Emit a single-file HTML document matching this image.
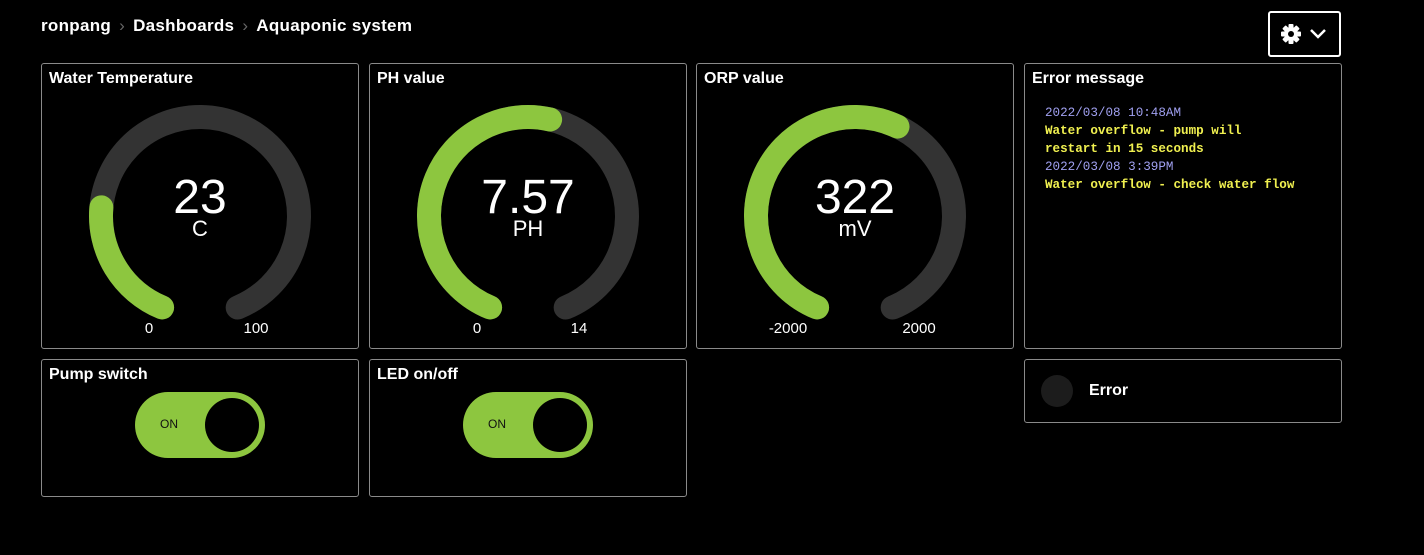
<!DOCTYPE html>
<html><head><meta charset="utf-8"><style>
*{margin:0;padding:0;box-sizing:border-box}
body{width:1424px;height:555px;background:#000;color:#fff;font-family:"Liberation Sans",sans-serif;position:relative;overflow:hidden}
.bc{position:absolute;left:41px;top:16px;font-size:17px;font-weight:bold;white-space:nowrap;letter-spacing:0.3px}
.bc span.s{color:#666;font-weight:normal;margin:0 8px}
.card{position:absolute;border:1px solid #8a8a8a;border-radius:3px;background:#000}
.t{position:absolute;left:7px;top:6px;font-size:16px;font-weight:bold}
.gbtn{position:absolute;left:1268px;top:11px;width:73px;height:46px;border:2px solid #fff;border-radius:3px}
.log{position:absolute;left:20px;top:40px;font-family:"Liberation Mono",monospace;font-size:12.6px;line-height:18px;font-weight:bold}
.d{color:#a0a0f0;font-weight:normal}.m{color:#f0f050}
.tog{position:absolute;width:130px;height:66px;border-radius:33px;background:#8dc63f}
.tog .k{position:absolute;right:6px;top:6px;width:54px;height:54px;border-radius:50%;background:#000}
.tog .on{position:absolute;left:25px;top:25px;font-size:12px;color:#111}
</style></head><body>
<div class="bc">ronpang<span class="s">›</span>Dashboards<span class="s">›</span>Aquaponic system</div>
<div class="gbtn"><svg width="73" height="46" viewBox="0 0 73 46" style="position:absolute;left:-2px;top:-2px">
<g transform="translate(23,23)" fill="#fff"><circle r="7"/>
<g id="tt"><rect x="-2.5" y="-10" width="5" height="20" rx="1"/></g>
<use href="#tt" transform="rotate(45)"/><use href="#tt" transform="rotate(90)"/><use href="#tt" transform="rotate(135)"/>
<circle r="3" fill="#000"/></g>
<path d="M43 19l7 7 7-7" stroke="#fff" stroke-width="2.5" fill="none"/></svg></div>

<div class="card" style="left:41px;top:63px;width:318px;height:286px"><div class="t">Water Temperature</div></div>
<div class="card" style="left:369px;top:63px;width:318px;height:286px"><div class="t">PH value</div></div>
<div class="card" style="left:696px;top:63px;width:318px;height:286px"><div class="t">ORP value</div></div>
<div class="card" style="left:1024px;top:63px;width:318px;height:286px"><div class="t">Error message</div>
<div class="log"><div class="d">2022/03/08 10:48AM</div><div class="m">Water overflow - pump will<br>restart in 15 seconds</div><div class="d">2022/03/08 3:39PM</div><div class="m">Water overflow - check water flow</div></div></div>

<svg width="1424" height="555" style="position:absolute;left:0;top:0" font-family="Liberation Sans,sans-serif" fill="#fff">
<g fill="none" stroke-width="24" stroke-linecap="round">
<circle cx="200" cy="216" r="99" stroke="#333" stroke-dasharray="544.3 1000" transform="rotate(112.5 200 216)"/>
<circle cx="200" cy="216" r="99" stroke="#8dc63f" stroke-dasharray="125.2 1000" transform="rotate(112.5 200 216)"/>
<circle cx="528" cy="216" r="99" stroke="#333" stroke-dasharray="544.3 1000" transform="rotate(112.5 528 216)"/>
<circle cx="528" cy="216" r="99" stroke="#8dc63f" stroke-dasharray="294.3 1000" transform="rotate(112.5 528 216)"/>
<circle cx="855" cy="216" r="99" stroke="#333" stroke-dasharray="544.3 1000" transform="rotate(112.5 855 216)"/>
<circle cx="855" cy="216" r="99" stroke="#8dc63f" stroke-dasharray="316 1000" transform="rotate(112.5 855 216)"/>
</g>
<g text-anchor="middle">
<text x="200" y="213" font-size="48">23</text><text x="200" y="236" font-size="22">C</text>
<text x="528" y="213" font-size="48">7.57</text><text x="528" y="236" font-size="22">PH</text>
<text x="855" y="213" font-size="48">322</text><text x="855" y="236" font-size="22">mV</text>
<g font-size="15"><text x="149" y="333">0</text><text x="256" y="333">100</text>
<text x="477" y="333">0</text><text x="579" y="333">14</text>
<text x="788" y="333">-2000</text><text x="919" y="333">2000</text></g>
</g></svg>

<div class="card" style="left:41px;top:359px;width:318px;height:138px"><div class="t">Pump switch</div></div>
<div class="tog" style="left:135px;top:392px"><span class="on">ON</span><div class="k"></div></div>
<div class="card" style="left:369px;top:359px;width:318px;height:138px"><div class="t">LED on/off</div></div>
<div class="tog" style="left:463px;top:392px"><span class="on">ON</span><div class="k"></div></div>
<div class="card" style="left:1024px;top:359px;width:318px;height:64px">
<div style="position:absolute;left:16px;top:15px;width:32px;height:32px;border-radius:50%;background:#1c1c1c"></div>
<div style="position:absolute;left:64px;top:22px;font-size:16px;font-weight:bold">Error</div></div>
</body></html>
